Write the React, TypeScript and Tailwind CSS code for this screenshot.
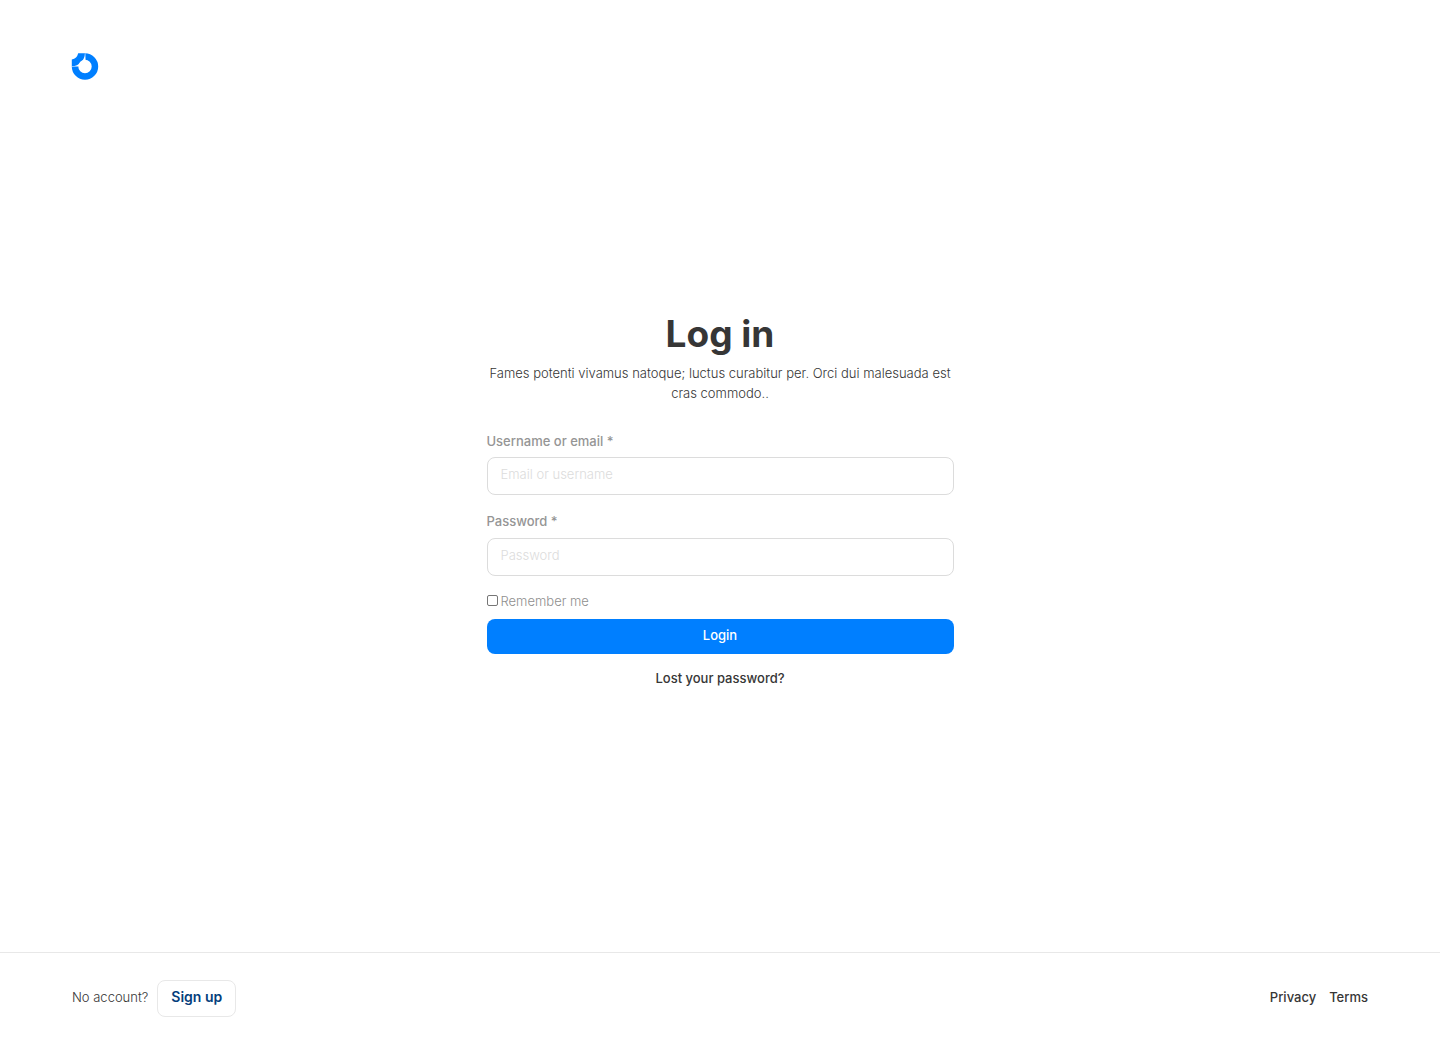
export default function App() {
  const field =
    "block h-[38px] w-full rounded-lg border border-[#dcdcdc] bg-white px-[13px] pb-1 text-[13px] font-light text-[#363636] placeholder:text-[#dcdcdc]";
  return (
    <div className="flex min-h-screen flex-col bg-white font-['Inter',sans-serif] text-[13px] leading-5 text-[#363636]">
      <header className="px-[5%] pt-[53px]">
        <a href="#" aria-label="Home" className="block w-[27px]">
          <svg viewBox="0 0 27 27" className="block size-[27px] overflow-visible">
            <path
              fill="#007fff"
              fillRule="evenodd"
              d="M6.2 0.3H13A13.2 13.2 0 1 1 -0.2 13.5V6.5Q5 5.5 6.2 0.3ZM13 6.8A6.7 6.7 0 1 0 13 20.2A6.7 6.7 0 1 0 13 6.8Z"
            />
            <path d="M12.9 0.3L13.3 0.3L13.6 8L9 10L6.5 13.5L-0.2 13.5L-0.2 13.1A12.9 12.9 0 0 0 12.9 0.3Z" fill="white" />
          </svg>
        </a>
      </header>
      <main className="flex flex-1 flex-col items-center justify-center px-6 pb-9">
        <div className="w-full max-w-[467px]">
          <h1 className="mb-1 text-center text-[37px] leading-[50px] font-bold">Log in</h1>
          <p className="text-center font-light">
            Fames potenti vivamus natoque; luctus curabitur per. Orci dui malesuada est cras commodo..
          </p>
          <form className="mt-7" onSubmit={(e) => e.preventDefault()}>
            <label htmlFor="user" className="mb-[6px] block font-medium text-[#959595]">Username or email *</label>
            <input id="user" type="text" placeholder="Email or username" className={field} />
            <label htmlFor="pass" className="mt-4 mb-[7px] block font-medium text-[#959595]">Password *</label>
            <input id="pass" type="password" placeholder="Password" className={field} />
            <label className="mt-[15px] mb-2 flex items-center gap-[3px] font-light text-[#8f8f8f]">
              <input type="checkbox" className="size-[11px] appearance-none rounded-[2px] border border-[#767676] bg-white checked:bg-[#007fff]" />
              Remember me
            </label>
            <button type="submit" className="block h-[35px] w-full rounded-lg bg-[#007fff] pb-0.5 font-medium text-white">Login</button>
          </form>
          <p className="mt-[14px] text-center">
            <a href="#" className="font-medium">Lost your password?</a>
          </p>
        </div>
      </main>
      <footer className="flex items-center justify-between border-t border-[#e8e8e8] px-[5%] py-[27px]">
        <div className="flex items-center gap-[9px]">
          <span className="pb-1 font-light">No account?</span>
          <a href="#" className="flex h-[37px] items-center rounded-lg border border-[#e8e8e8] px-[13px] pb-1 text-sm font-semibold text-[#053e7c]">Sign up</a>
        </div>
        <nav className="flex gap-[13px] pb-1 font-medium">
          <a href="#">Privacy</a>
          <a href="#">Terms</a>
        </nav>
      </footer>
    </div>
  );
}
